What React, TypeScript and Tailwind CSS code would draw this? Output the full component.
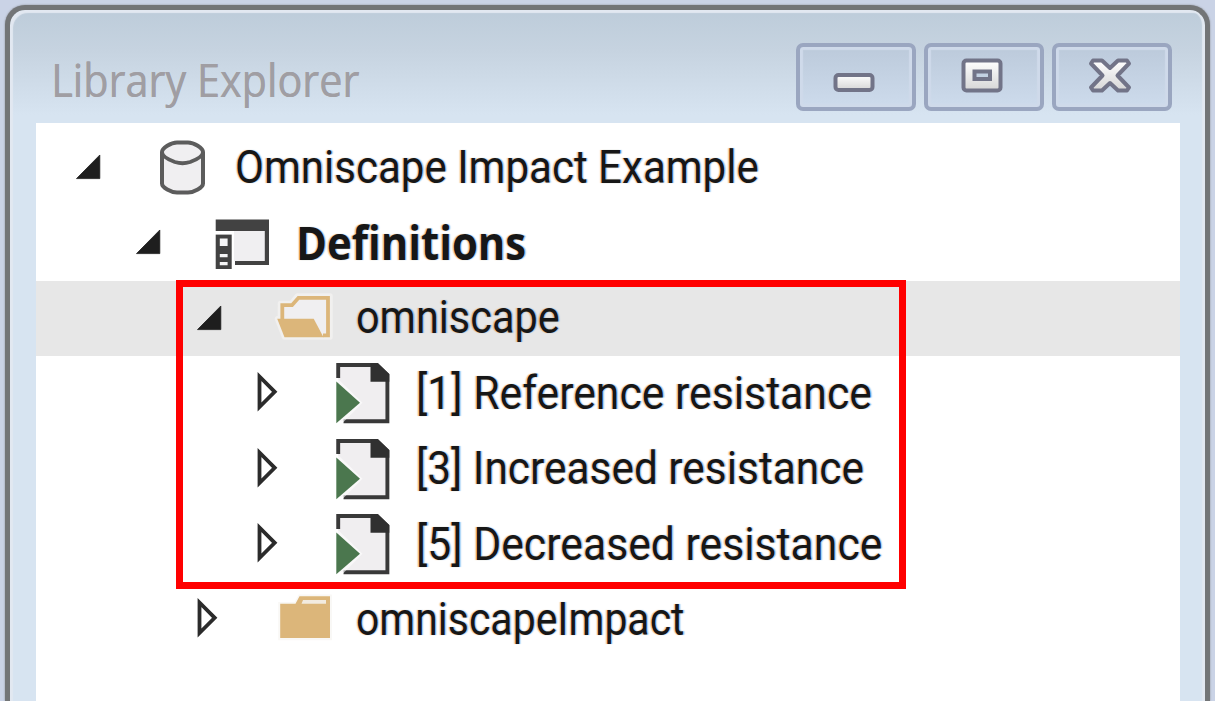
import type { ReactNode } from "react";

function Expander({ open }: { open: boolean }) {
  return (
    <svg className="h-full w-[78px] shrink-0" viewBox="0 0 78 75.4">
      {open ? (
        <path d="M1.500 48.600 H24.800 V25 Z" fill="#1e1e1e" stroke="#1e1e1e" strokeWidth="0.8" />
      ) : (
        <path d="M3.500 20.500 V51 L18.700 35.800 Z" fill="#fff" stroke="#2b2b2b" strokeWidth="3.800" />
      )}
    </svg>
  );
}

function Slot({ children }: { children: ReactNode }) {
  return (
    <svg className="h-full w-[82px] shrink-0" viewBox="0 0 82 75.4">
      {children}
    </svg>
  );
}

function DatabaseIcon() {
  return (
    <Slot>
      <path d="M9 22 C9 18 18 12.500 24 12.500 H35 C41 12.500 50 18 50 22 V53.500 C50 57.500 41 62.500 35 62.500 H24 C18 62.500 9 57.500 9 53.500 Z" fill="#f0eff1" stroke="#5c5c5c" strokeWidth="4" />
      <path d="M9 22 C9 27.500 18 30.500 22 32 Q29.500 34.500 37 32 C41 30.500 50 27.500 50 22" fill="none" stroke="#5c5c5c" strokeWidth="3.800" />
    </Slot>
  );
}

function DefinitionsIcon() {
  return (
    <Slot>
      <path d="M21 26 H52 V56 H21 Z" fill="#f0eff1" />
      <path d="M2.700 14.600 H56 V60.100 H22 V56 H51.800 V26 H2.700 Z" fill="#424242" />
      <path d="M2.700 29.600 H18.700 V64 H2.700 Z" fill="#424242" />
      <path d="M6.800 33.400 H14.600 V41 H6.800 Z M6.800 49 H14.600 V52.200 H6.800 Z M6.800 57 H14.600 V60.200 H6.800 Z" fill="#f5f5f6" />
    </Slot>
  );
}

function OpenFolderIcon() {
  return (
    <Slot>
      <path d="M3.500 37.700 H6.500 V22.500 H17.500 L23.500 15 H56 V56 H10.500 Z" fill="#f1f0ef" stroke="#f1f0ef" strokeWidth="5.500" strokeLinejoin="round" />
      <path d="M8.300 38 V24.200 H18 L24.500 16.800 H54 V54.400 H49" fill="#f0eff1" stroke="#dcb67a" strokeWidth="3.800" />
      <path d="M3.200 37.700 H39.700 L49.500 56.300 H10.500 Z" fill="#dcb67a" />
    </Slot>
  );
}

function FolderIcon() {
  return (
    <Slot>
      <path d="M6.200 22 H22 L26 14.500 H56 V56.200 H6.200 Z" fill="#f7f4f0" stroke="#f9f8f6" strokeWidth="4" />
      <path d="M6.200 21.800 H21.500 L25.500 14.200 H56 V56 H6.200 Z" fill="#dcb67a" />
      <path d="M29 18 H52 V21.800 H27.500 Z" fill="#f2ebe0" />
    </Slot>
  );
}

function ScenarioIcon() {
  return (
    <Slot>
      <path d="M4 9 H43 L53.500 19 V65 H4 Z" fill="#f0eef0" />
      <path d="M4.200 22 V9 H43 L53.400 19 V65.200 H9.500" fill="none" stroke="#393939" strokeWidth="3.900" />
      <path d="M36.500 7.200 H44 L55.300 18 V25.800 H36.500 Z" fill="#303030" />
      <path d="M0.500 23 H4 L28.500 46.700 L7.500 68 H0.500 Z" fill="#fff" opacity="0.600" />
      <path d="M2.300 25.500 L26 46.700 L2.300 67.300 Z" fill="#4b774e" />
    </Slot>
  );
}

const fringe =
  "[text-shadow:-1.5px_0_1px_rgba(230,140,20,0.45),1.5px_0_1px_rgba(30,140,230,0.45)]";

type RowProps = {
  open: boolean;
  icon: ReactNode;
  label: string;
  indent: string;
  text: string;
  selected?: boolean;
};

function Row({ open, icon, label, indent, text, selected }: RowProps) {
  return (
    <div className={`flex h-[75.4px] shrink-0 items-center ${indent} ${selected ? "bg-[#e7e7e7]" : ""}`}>
      <Expander open={open} />
      {icon}
      <span className={`inline-block origin-left whitespace-pre leading-none text-[#171717] ${fringe} ${text}`}>
        {label}
      </span>
    </div>
  );
}

const normal = "mb-[2px] font-['Roboto',sans-serif] text-[46px]";

function CaptionButton({ children }: { children: ReactNode }) {
  return (
    <div className="h-[68px] w-[120px] rounded-[7px] border-4 border-[#9aa6c0] bg-linear-to-b from-[#bccadb] to-[#cddbec] shadow-[inset_0_0_1px_3px_#cfdaea]">
      <svg className="size-full" viewBox="0 0 112 60">
        <defs>
          <linearGradient id="glyph" x1="0" y1="0" x2="0" y2="1">
            <stop offset="0" stopColor="#fff" />
            <stop offset="1" stopColor="#d6d6d6" />
          </linearGradient>
        </defs>
        {children}
      </svg>
    </div>
  );
}

export default function App() {
  return (
    <div className="relative flex h-[701px] w-[1215px] overflow-hidden bg-[#cad3e6] pl-[5px] pr-[5px] pt-[5px]">
      <div className="flex w-full flex-col rounded-t-[20px] border-x-[5px] border-t-[5px] border-[#737577] bg-[#d7e4f1] bg-[linear-gradient(#bdccda_0px,#c6d3e0_40px,#d7e4f1_105px)] px-[26px] shadow-[inset_3px_3px_1px_#e2e8f1,inset_-3px_0_1px_#e2e8f1,0_0_2px_#85888e]">
        <header className="flex h-[113px] shrink-0 items-start justify-between pl-[15px] pr-[7px]">
          <h1 className="mt-[43px] origin-left scale-x-[0.9] whitespace-pre font-['Open_Sans',sans-serif] text-[46px] font-normal leading-[52px] text-[#a09ea3] [text-shadow:0.5px_0_0.5px_#a09ea3]">
            Library Explorer
          </h1>
          <div className="mt-[33px] flex gap-2">
            <CaptionButton>
              <rect x="35.500" y="28" width="37" height="15" rx="3" fill="url(#glyph)" stroke="#727488" strokeWidth="4" />
            </CaptionButton>
            <CaptionButton>
              <rect x="35.500" y="13.500" width="37" height="30" rx="3" fill="url(#glyph)" stroke="#727488" strokeWidth="4" />
              <rect x="46.500" y="24.500" width="15.500" height="7.500" fill="#c3d1e2" stroke="#727488" strokeWidth="4" />
            </CaptionButton>
            <CaptionButton>
              <path
                d="M37 13.500 H46 L54 21 L62 13.500 H71 L73 16.500 L61.500 28.500 L73 40.500 L71 43.500 H62 L54 36 L46 43.500 H37 L35 40.500 L46.500 28.500 L35 16.500 Z"
                fill="url(#glyph)"
                stroke="#727488"
                strokeWidth="4"
                strokeLinejoin="round"
              />
            </CaptionButton>
          </div>
        </header>
        <main className="mr-[-1px] flex grow flex-col bg-white pt-[7px]">
          <Row open icon={<DatabaseIcon />} label="Omniscape Impact Example" indent="pl-[39px]" text={`${normal} scale-x-[0.914]`} />
          <Row open icon={<DefinitionsIcon />} label="Definitions" indent="pl-[99.3px]" text="mb-[3px] ml-px font-['Open_Sans',sans-serif] text-[46px] font-bold scale-x-[0.91]" />
          <Row open selected icon={<OpenFolderIcon />} label="omniscape" indent="pl-[159.6px]" text={`${normal} scale-x-[0.9]`} />
          <Row open={false} icon={<ScenarioIcon />} label="[1] Reference resistance" indent="pl-[219.9px]" text={`${normal} scale-x-[0.928]`} />
          <Row open={false} icon={<ScenarioIcon />} label="[3] Increased resistance" indent="pl-[219.9px]" text={`${normal} scale-x-[0.922]`} />
          <Row open={false} icon={<ScenarioIcon />} label="[5] Decreased resistance" indent="pl-[219.9px]" text={`${normal} scale-x-[0.928]`} />
          <Row open={false} icon={<FolderIcon />} label="omniscapeImpact" indent="pl-[159.6px]" text={`${normal} scale-x-[0.89]`} />
        </main>
      </div>
      <div className="absolute left-[176px] top-[280px] h-[309px] w-[730px] border-[7px] border-[#ff0000]" />
    </div>
  );
}
